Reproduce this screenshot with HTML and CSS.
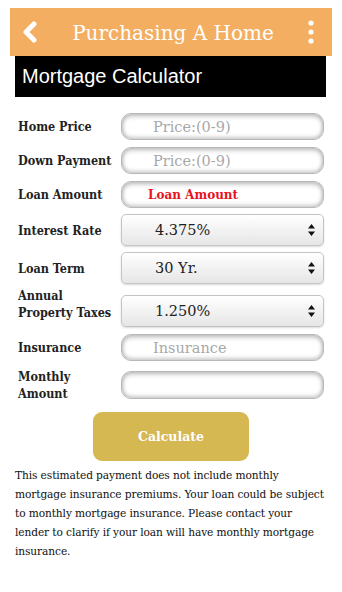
FILE: index.html
```html
<!DOCTYPE html>
<html>
<head>
<meta charset="utf-8">
<link rel="stylesheet" href="styles.css">
</head>
<body>
<div class="app">
  <header class="topbar">
    <svg class="back" width="16" height="22" viewBox="0 0 16 22"><path d="M12 3 L4 11 L12 19" fill="none" stroke="#fff" stroke-width="5" stroke-linecap="round" stroke-linejoin="round"/></svg>
    <h1 class="title">Purchasing A Home</h1>
    <svg class="menu" width="6" height="24" viewBox="0 0 6 24"><circle cx="3" cy="3" r="2.6" fill="#fff"/><circle cx="3" cy="12" r="2.6" fill="#fff"/><circle cx="3" cy="21" r="2.6" fill="#fff"/></svg>
  </header>
  <div class="subbar">Mortgage Calculator</div>

  <form class="calc">
    <div class="row r1">
      <label class="lbl">Home Price</label>
      <div class="field"><span class="ph">Price:(0-9)</span></div>
    </div>
    <div class="row">
      <label class="lbl">Down Payment</label>
      <div class="field"><span class="ph">Price:(0-9)</span></div>
    </div>
    <div class="row">
      <label class="lbl">Loan Amount</label>
      <div class="field"><span class="loan">Loan Amount</span></div>
    </div>
    <div class="row rs">
      <label class="lbl">Interest Rate</label>
      <div class="select"><span class="val">4.375%</span><svg class="arr" width="7" height="12" viewBox="0 0 7 12"><path d="M3.5 0 L7 4.5 L0 4.5Z M0 7.5 L7 7.5 L3.5 12Z" fill="#111"/></svg></div>
    </div>
    <div class="row rs">
      <label class="lbl">Loan Term</label>
      <div class="select"><span class="val">30 Yr.</span><svg class="arr" width="7" height="12" viewBox="0 0 7 12"><path d="M3.5 0 L7 4.5 L0 4.5Z M0 7.5 L7 7.5 L3.5 12Z" fill="#111"/></svg></div>
    </div>
    <div class="row rt">
      <label class="lbl two up">Annual<br>Property Taxes</label>
      <div class="select"><span class="val">1.250%</span><svg class="arr" width="7" height="12" viewBox="0 0 7 12"><path d="M3.5 0 L7 4.5 L0 4.5Z M0 7.5 L7 7.5 L3.5 12Z" fill="#111"/></svg></div>
    </div>
    <div class="row">
      <label class="lbl">Insurance</label>
      <div class="field"><span class="ph">Insurance</span></div>
    </div>
    <div class="row">
      <label class="lbl two">Monthly<br>Amount</label>
      <div class="field tall"></div>
    </div>
    <div class="btnrow">
      <button type="button" class="btn">Calculate</button>
    </div>
  </form>

  <p class="note">This estimated payment does not include monthly mortgage insurance premiums. Your loan could be subject to monthly mortgage insurance. Please contact your lender to clarify if your loan will have monthly mortgage insurance.</p>
</div>
</body>
</html>
```

FILE: styles.css
```css
html, body { margin: 0; padding: 0; background: #fff; }
body { font-family: "DejaVu Serif", Georgia, serif; color: #111; }
.app { width: 342px; padding-top: 8px; }

.topbar {
  margin: 0 10px;
  height: 48px;
  background: #f4ae62;
  display: flex;
  align-items: center;
  padding: 0 18px 0 12px;
  box-sizing: border-box;
}
.back { flex: none; }
.title {
  flex: 1;
  margin: 0;
  text-align: center;
  color: #fff;
  font-weight: normal;
  font-size: 20px;
  padding-top: 2px;
}
.menu { flex: none; }

.subbar {
  margin: 0 16px 0 15px;
  height: 41px;
  background: #000;
  color: #fff;
  font-family: "Liberation Sans", Arial, sans-serif;
  font-size: 20px;
  line-height: 40px;
  padding-left: 7px;
}

.calc { margin: 0; padding: 0 18px; }
.row {
  display: flex;
  align-items: center;
  margin-top: 7px;
}
.r1 { margin-top: 16px; }
.rs { margin-top: 6px; }
.rt { margin-top: 11px; }
.lbl {
  width: 103px;
  flex: none;
  font-weight: bold;
  font-size: 12.5px;
  line-height: 17px;
  color: #222;
  font-stretch: condensed;
}
.lbl.up { margin-top: -14px; }

.field {
  width: 203px;
  height: 27px;
  box-sizing: border-box;
  border: 1px solid #b8b8b8;
  border-radius: 10px;
  background: #fff;
  box-shadow: inset 0 2px 5px rgba(0,0,0,0.28), inset 0 -2px 4px rgba(0,0,0,0.18);
  display: flex;
  align-items: center;
  padding-left: 31px;
}
.field.tall { height: 28px; }
.ph { color: #a8a8a8; font-size: 14.5px; }
.loan { color: #e8141b; font-weight: bold; font-size: 12px; margin-left: -5px; }

.select {
  width: 203px;
  height: 32px;
  box-sizing: border-box;
  border: 1px solid #c4c4c4;
  border-radius: 5px;
  background: linear-gradient(#ffffff, #e6e6e6);
  box-shadow: 0 1px 2px rgba(0,0,0,0.15);
  display: flex;
  align-items: center;
  padding: 0 8px 0 33px;
}
.val { flex: 1; font-size: 14.5px; color: #222; }
.arr { flex: none; }

.btnrow { display: flex; justify-content: center; margin-top: 10px; }
.btn {
  width: 156px;
  height: 49px;
  border: none;
  border-radius: 9px;
  background: #d6b852;
  color: #fff;
  font-family: "DejaVu Serif", Georgia, serif;
  font-weight: bold;
  font-size: 12.5px;
}

.note {
  margin: 5px 16px 0 15px;
  font-size: 11.8px;
  line-height: 19px;
  letter-spacing: -0.1px;
  color: #111;
  font-stretch: condensed;
}
```
